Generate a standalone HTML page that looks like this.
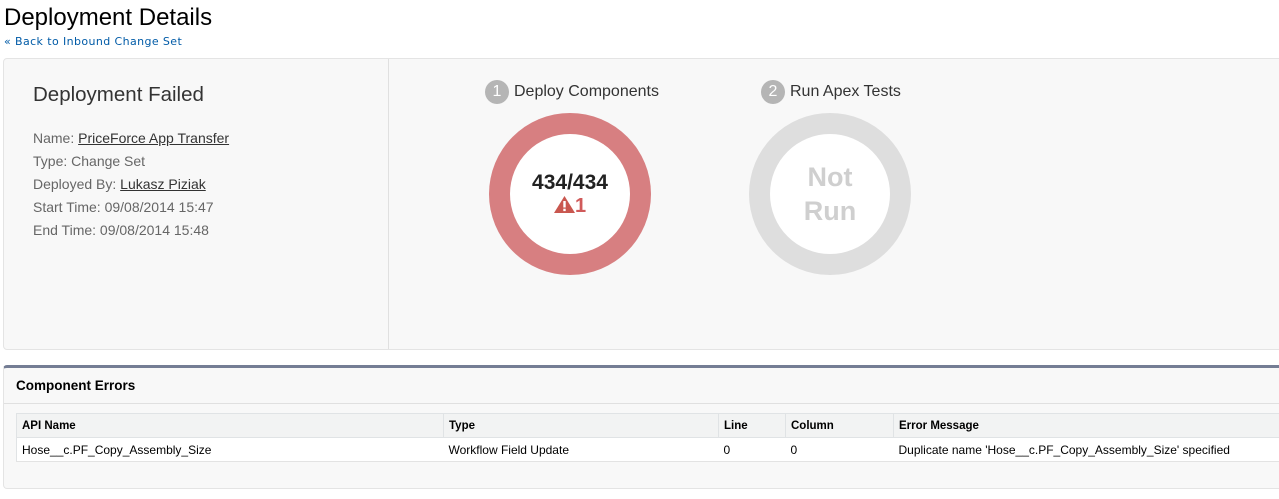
<!DOCTYPE html>
<html><head><meta charset="utf-8"><style>
*{margin:0;padding:0;box-sizing:border-box}
body{width:1279px;height:499px;background:#fff;font-family:"Liberation Sans",Arial,sans-serif;position:relative;overflow:hidden}
.a{position:absolute;white-space:nowrap}
h1{position:absolute;left:4px;top:4px;font-size:24px;font-weight:normal;color:#000}
.back{left:4px;top:35px;color:#015ba7;font-family:"DejaVu Sans",sans-serif;font-size:11px;letter-spacing:0.4px}
.panel{position:absolute;left:3px;top:58px;width:1280px;height:292px;background:#f8f8f8;border:1px solid #e4e4e4;border-radius:4px}
.div{position:absolute;left:388px;top:59px;width:1px;height:290px;background:#e0e0e0}
.df{left:33px;top:83px;font-size:20.5px;color:#333}
.info{left:33px;font-size:14px;color:#666}
.info u{color:#333}
.step{font-size:16px;color:#333}
.num{display:inline-block;width:24px;height:24px;border-radius:50%;background:#b5b5b5;color:#fff;text-align:center;line-height:24px;font-size:16px;margin-right:5px;vertical-align:middle}
.ring{position:absolute;width:162px;height:162px;border-radius:50%}
.ring .in{position:absolute;left:21px;top:21px;width:120px;height:120px;border-radius:50%;background:#fff;text-align:center}
.sec{position:absolute;left:3px;top:365px;width:1280px;height:124px;background:#f8f8f8;border:1px solid #e4e4e4;border-top:3px solid #747d94;border-radius:4px}
.hd{left:16px;top:378px;font-size:13.5px;font-weight:bold;color:#000}
.hl{position:absolute;left:4px;top:403px;width:1276px;height:1px;background:#e0e0e0}
table{position:absolute;left:16px;top:413px;width:1266px;border-collapse:collapse;font-size:12px;color:#000}
th{background:#f2f3f3;text-align:left;height:24px;padding-left:5px;font-weight:bold;border:1px solid #e0e3e5;font-size:11.5px}
td{background:#fff;height:24px;padding-left:5px;border-bottom:1px solid #e3e3e3}
th:first-child,td:first-child{border-left:1px solid #e0e3e5}
</style></head><body>
<h1>Deployment Details</h1>
<div class="a back">« Back to Inbound Change Set</div>
<div class="panel"></div>
<div class="div"></div>
<div class="a df">Deployment Failed</div>
<div class="a info" style="top:130px">Name: <u>PriceForce App Transfer</u></div>
<div class="a info" style="top:153px">Type: Change Set</div>
<div class="a info" style="top:176px">Deployed By: <u>Lukasz Piziak</u></div>
<div class="a info" style="top:199px">Start Time: 09/08/2014 15:47</div>
<div class="a info" style="top:222px">End Time: 09/08/2014 15:48</div>
<div class="a step" style="left:485px;top:80px"><span class="num">1</span>Deploy Components</div>
<div class="a step" style="left:761px;top:80px"><span class="num">2</span>Run Apex Tests</div>
<div class="ring" style="left:489px;top:113px;background:#d77f81"><div class="in">
<div style="margin-top:37px;font-size:21px;font-weight:bold;color:#222">434/434</div>
<div style="font-size:20px;font-weight:bold;color:#d05a5a;line-height:22px"><svg width="21" height="17" viewBox="0 0 21 17" style="vertical-align:-1px"><path d="M10.5 0L21 17H0z" fill="#c9574f"/><rect x="9.3" y="5" width="2.4" height="6.5" fill="#fff"/><rect x="9.3" y="12.7" width="2.4" height="2.4" fill="#fff"/></svg>1</div>
</div></div>
<div class="ring" style="left:749px;top:113px;background:#dedede"><div class="in">
<div style="margin-top:26px;font-size:27px;font-weight:bold;color:#cfcfcf;line-height:34px">Not<br>Run</div>
</div></div>
<div class="sec"></div>
<div class="a hd">Component Errors</div>
<div class="hl"></div>
<table>
<tr><th style="width:427px">API Name</th><th style="width:275px">Type</th><th style="width:67px">Line</th><th style="width:108px">Column</th><th>Error Message</th></tr>
<tr><td>Hose__c.PF_Copy_Assembly_Size</td><td>Workflow Field Update</td><td>0</td><td>0</td><td>Duplicate name 'Hose__c.PF_Copy_Assembly_Size' specified</td></tr>
</table>
</body></html>
